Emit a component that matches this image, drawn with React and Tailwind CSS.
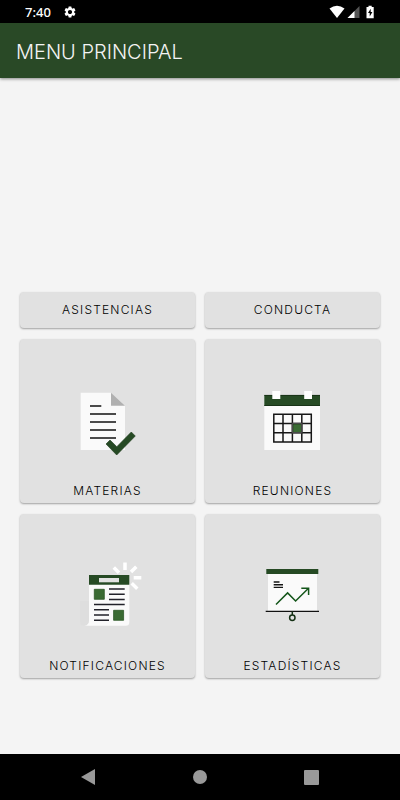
import React from "react";
import { MdSettings } from "react-icons/md";

function MateriasIcon() {
  return (
    <svg viewBox="0 0 75 75" className="size-[75px]" aria-hidden="true">
      <path d="M10.7 7.7H41L55 20.7V65H10.7z" fill="#fafafa" />
      <path d="M41 7.7L55 20.7H41z" fill="#b0b0b0" />
      <path d="M20 21h11.3M20 29h26M20 37h26M20 45h26M20 53h26" stroke="#111" strokeWidth="1.7" />
      <path d="M36 59L40 55L46.8 61.7L61.3 47L65.3 51L46.7 70z" fill="#264a24" stroke="#1c3a1b" strokeWidth=".6" />
    </svg>
  );
}

function ReunionesIcon() {
  return (
    <svg viewBox="0 0 75 75" className="size-[75px]" aria-hidden="true">
      <path d="M9.3 10H65v55H9.3z" fill="#fafafa" />
      <path d="M9.3 10H65v10.9H9.3z" fill="#264a24" />
      <path d="M9.3 20.5H65M9.3 10.4H65" stroke="#142c13" strokeWidth=".8" />
      <path d="M17.3 6h8v8h-8zM49.2 6h7.8v8h-7.8z" fill="#fff" />
      <path d="M37.5 38.3h9.2v9.4h-9.2z" fill="#3a6b33" />
      <path
        d="M18.8 29.2H56.3V57H18.8zM28 29.2V57M37.4 29.2V57M46.8 29.2V57M18.8 38.4H56.3M18.8 47.7H56.3"
        fill="none"
        stroke="#161616"
        strokeWidth="1.5"
      />
      <path d="M37.4 38.4h9.4v9.3h-9.4z" fill="none" stroke="#4a4a4a" strokeWidth="1.4" />
    </svg>
  );
}

function NotificacionesIcon() {
  return (
    <svg viewBox="0 0 75 75" className="size-[75px]" aria-hidden="true">
      <path d="M10 41h9v24.7h-5a4 4 0 0 1-4-4z" fill="#dedede" />
      <path d="M19 24h40.3v38.2a3.5 3.5 0 0 1-3.5 3.5H14.5q4.5-.8 4.5-5z" fill="#fafafa" />
      <path d="M19 15h40.3v9.7H19z" fill="#264a24" />
      <path d="M29 18h20v4.3H29z" fill="#e2e2e2" />
      <path d="M24.3 29.3h10v10h-10zM43.6 50.3h10v10h-10z" fill="#3a6b33" stroke="#2c5827" strokeWidth=".8" />
      <path
        d="M39 29h15.7M39 34.2h15.7M39 39.4h15.7M24 44.5h30.7M24 49.7h15M24 55h15M24 60.3h15"
        stroke="#22222a"
        strokeWidth="1.5"
      />
      <path
        d="M55 2.5V10M43.8 7.5L49 12.7M66.3 6.7L61 12M63.7 17.7H71.3M61.7 23.3L67.3 28.7"
        stroke="#fff"
        strokeWidth="3.5"
      />
    </svg>
  );
}

function EstadisticasIcon() {
  return (
    <svg viewBox="0 0 75 75" className="size-[75px]" aria-hidden="true">
      <path d="M13 13h49v38H13z" fill="#fafafa" />
      <path d="M11.3 9h52v5h-52z" fill="#264a24" />
      <path d="M10.7 51.4H64" stroke="#111" strokeWidth="1.3" />
      <path d="M18.7 22h5.8M18.7 24.7H28M18.7 27.4H28" stroke="#161616" strokeWidth="1.4" />
      <g fill="none" strokeWidth="1.5">
        <path d="M21 44.5L32.6 32.9L40.6 41L53.5 28.3M46.3 28.3h7.3v6.7" stroke="#14561a" />
        <path d="M37.3 51.4V55" stroke="#143014" />
        <circle cx="37.3" cy="57.7" r="2.7" stroke="#143014" />
      </g>
    </svg>
  );
}

const cards = [
  { label: "MATERIAS", Icon: MateriasIcon },
  { label: "REUNIONES", Icon: ReunionesIcon },
  { label: "NOTIFICACIONES", Icon: NotificacionesIcon },
  { label: "ESTADÍSTICAS", Icon: EstadisticasIcon },
];

const cardClass =
  "rounded bg-[#e1e1e1] text-xs font-light tracking-widest text-black shadow-[0_1px_2px_rgba(0,0,0,0.35)]";

function StatusBar() {
  return (
    <div className="flex h-[23px] items-center justify-between bg-black px-[25px] text-white">
      <div className="flex items-center gap-3">
        <span className="font-['Noto_Sans',sans-serif] text-[13px] font-medium leading-4">7:40</span>
        <MdSettings className="size-[14px]" />
      </div>
      <svg viewBox="0 0 46 14" className="h-[14px] w-[46px]" aria-hidden="true">
        <path d="M.5 3.5Q8 -2 15.5 3.5L8 13z" fill="#fff" />
        <path d="M30.5 1v12h-12z" fill="#555" />
        <path d="M25.5 6v7h-7z" fill="#fff" />
        <path d="M37.5 2h2V.8h3.2V2h2v11.2h-7.2z" fill="#fff" />
        <path d="M41.7 3.8L39 8h1.7v3.5L43.4 7h-1.7z" fill="#000" />
      </svg>
    </div>
  );
}

function NavBar() {
  return (
    <nav className="flex h-[46px] items-center justify-center bg-black text-[#999]">
      <button type="button" aria-label="Atrás" className="flex h-full w-[111px] items-center justify-center">
        <svg viewBox="0 0 16 16" className="size-4" fill="currentColor">
          <path d="M0 8L14 0v16z" />
        </svg>
      </button>
      <button type="button" aria-label="Inicio" className="flex h-full w-[111px] items-center justify-center">
        <span className="size-[14px] rounded-full bg-[#999]" />
      </button>
      <button type="button" aria-label="Recientes" className="flex h-full w-[111px] items-center justify-center">
        <span className="size-[15px] rounded-[1px] bg-[#999]" />
      </button>
    </nav>
  );
}

export default function App() {
  return (
    <div className="flex min-h-screen flex-col bg-[#f4f4f4] font-['Inter',sans-serif]">
      <StatusBar />
      <header className="flex h-[55px] items-center bg-[#294926] px-4 pt-[2px] shadow-[0_1px_3px_rgba(0,0,0,0.45)]">
        <h1 className="text-xl font-light text-[#f4f4f4]">MENU PRINCIPAL</h1>
      </header>
      <main className="flex flex-1 flex-col justify-end px-5 pb-[76px]">
        <div className="grid grid-cols-2 gap-x-[10px] gap-y-[11px]">
          <button type="button" className={`h-9 ${cardClass}`}>ASISTENCIAS</button>
          <button type="button" className={`h-9 ${cardClass}`}>CONDUCTA</button>
          {cards.map(({ label, Icon }) => (
            <button
              key={label}
              type="button"
              className={`flex flex-col items-center gap-[23px] pt-[46px] pb-1 ${cardClass}`}
            >
              <Icon />
              <span>{label}</span>
            </button>
          ))}
        </div>
      </main>
      <NavBar />
    </div>
  );
}
